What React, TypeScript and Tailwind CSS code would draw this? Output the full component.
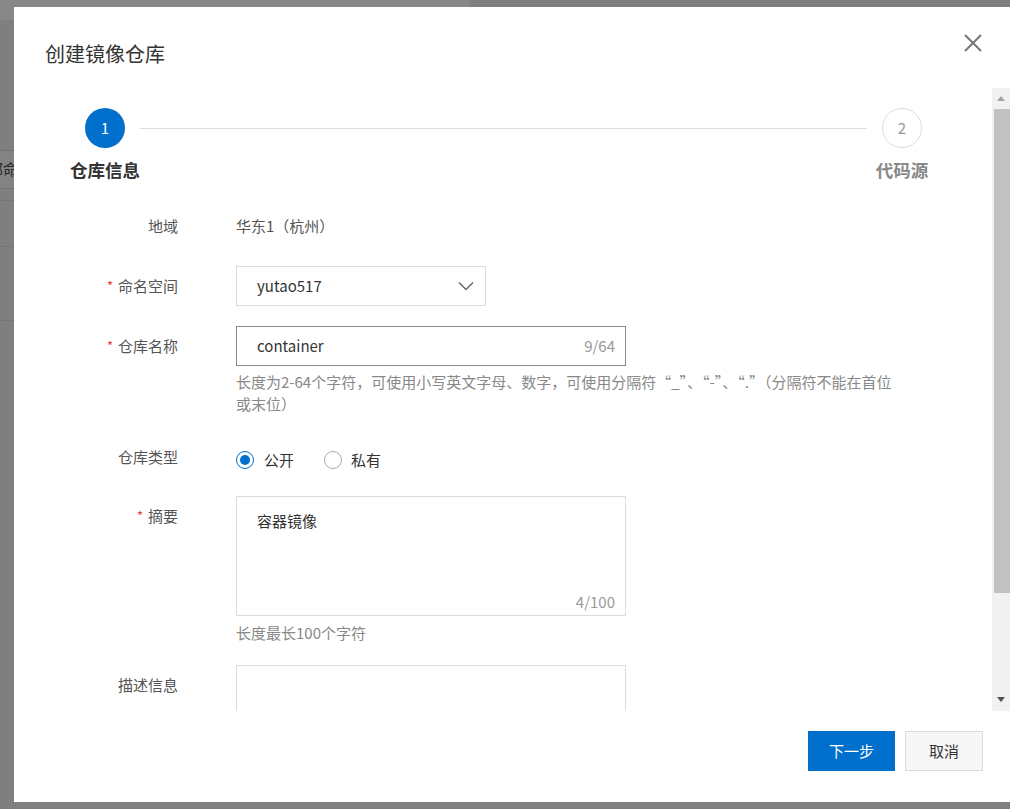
import React from "react";

const FONT = { fontFamily: '"Noto Sans CJK SC", "Noto Sans", sans-serif' };

function Label({ text, required }: { text: string; required?: boolean }) {
  return (
    <div className="flex w-[164px] shrink-0 justify-end whitespace-nowrap text-[15px] leading-[40px] text-[#555]">
      {required && <span className="mr-[5px] text-[13px] text-[#e8412f]">*</span>}
      <span>{text}</span>
    </div>
  );
}

export default function App() {
  return (
    <div className="relative h-[809px] w-[1010px] overflow-hidden bg-[#7f7f7f]" style={FONT}>
      {/* dimmed page behind the dialog */}
      <div className="h-[20px] w-[470px] bg-[#878787]" />
      <div className="h-[130px]" />
      <div className="flex h-[39px] items-center whitespace-nowrap border-y border-[#737373] bg-[#838383] text-[15px] text-[#262626]">
        <span className="-ml-[27px]">全部命名空间</span>
      </div>
      <div className="h-[11px]" />
      <div className="h-[46px] border-t border-[#767676]" />
      <div className="h-[74px] border-t border-[#767676]" />
      <div className="border-t border-[#767676]" />

      {/* dialog */}
      <div className="absolute left-[14px] top-[7px] flex h-[795px] w-[996px] flex-col bg-white">
        {/* header */}
        <div className="relative h-[81px] shrink-0 pl-[31px] pt-[33px]">
          <div className="text-[20px] leading-[28px] text-[#333]">创建镜像仓库</div>
          <button className="absolute right-[28px] top-[27px] h-[18px] w-[18px]">
            <svg width="18" height="18" viewBox="0 0 18 18">
              <path d="M1 1 L17 17 M17 1 L1 17" stroke="#777" strokeWidth="2" fill="none" />
            </svg>
          </button>
        </div>

        {/* body */}
        <div className="flex h-[623px] shrink-0">
          <div className="flex-1 overflow-hidden">
            {/* steps */}
            <div className="flex items-start pl-[56px] pr-[64px] pt-[20px]">
              <div className="flex w-[70px] flex-col items-center">
                <div className="flex h-[40px] w-[40px] items-center justify-center rounded-full bg-[#0070cc] text-[15px] text-white">
                  1
                </div>
                <div className="mt-[10px] whitespace-nowrap text-[17.5px] font-bold leading-[24px] text-[#333]">
                  仓库信息
                </div>
              </div>
              <div className="mr-[9px] mt-[20px] h-px flex-1 bg-[#dddddd]" />
              <div className="flex w-[52px] flex-col items-center">
                <div className="flex h-[40px] w-[40px] items-center justify-center rounded-full border border-[#dddddd] text-[15px] text-[#999]">
                  2
                </div>
                <div className="mt-[10px] whitespace-nowrap text-[17.5px] font-bold leading-[24px] text-[#888]">
                  代码源
                </div>
              </div>
            </div>

            {/* form */}
            <div className="flex flex-col">
              <div className="mt-[24px] flex">
                <Label text="地域" />
                <div className="ml-[58px] text-[15px] leading-[40px] text-[#555]">华东1（杭州）</div>
              </div>

              <div className="mt-[20px] flex">
                <Label text="命名空间" required />
                <div className="ml-[58px] flex h-[40px] w-[250px] items-center justify-between border border-[#dcdcdc] pl-[20px] pr-[11px] text-[15px] text-[#333]">
                  <span>yutao517</span>
                  <svg width="16" height="10" viewBox="0 0 16 10">
                    <path d="M1 1.5 L8 8.5 L15 1.5" stroke="#666" strokeWidth="1.5" fill="none" />
                  </svg>
                </div>
              </div>

              <div className="mt-[20px] flex">
                <Label text="仓库名称" required />
                <div className="ml-[58px] flex flex-col">
                  <div className="flex h-[40px] w-[390px] items-center justify-between border border-[#8a8a8a] pl-[20px] pr-[10px] text-[15px]">
                    <span className="text-[#333]">container</span>
                    <span className="text-[#999]">9/64</span>
                  </div>
                  <div className="mt-[5px] text-[15px] leading-[22px] text-[#888]">
                    <div className="whitespace-nowrap">
                      长度为2-64个字符，可使用小写英文字母、数字，可使用分隔符“_”、“-”、“.”（分隔符不能在首位
                    </div>
                    <div>或末位）</div>
                  </div>
                </div>
              </div>

              <div className="mt-[22px] flex">
                <Label text="仓库类型" />
                <div className="ml-[58px] flex h-[40px] items-center pt-[6px] text-[15px] text-[#333]">
                  <span className="flex h-[18px] w-[18px] items-center justify-center rounded-full border-[1.5px] border-[#0070cc]">
                    <span className="h-[10px] w-[10px] rounded-full bg-[#0070cc]" />
                  </span>
                  <span className="ml-[10px]">公开</span>
                  <span className="ml-[30px] h-[18px] w-[18px] rounded-full border border-[#aaaaaa]" />
                  <span className="ml-[9px]">私有</span>
                </div>
              </div>

              <div className="mt-[19px] flex">
                <Label text="摘要" required />
                <div className="ml-[58px] flex flex-col">
                  <div className="relative h-[120px] w-[390px] border border-[#dcdcdc] pl-[20px] pt-[13px] text-[15px] leading-[22px] text-[#333]">
                    容器镜像
                    <span className="absolute bottom-[2px] right-[10px] text-[#999]">4/100</span>
                  </div>
                  <div className="mt-[6px] text-[15px] leading-[22px] text-[#888]">长度最长100个字符</div>
                </div>
              </div>

              <div className="mt-[21px] flex">
                <Label text="描述信息" />
                <div className="ml-[58px] h-[120px] w-[390px] border border-[#dcdcdc]" />
              </div>
            </div>
          </div>

          {/* scrollbar */}
          <div className="flex w-[18px] shrink-0 flex-col bg-[#f1f1f1]">
            <div className="flex h-[21px] items-center justify-center">
              <svg width="8" height="5" viewBox="0 0 8 5">
                <path d="M0 5 L4 0 L8 5 Z" fill="#a3a3a3" />
              </svg>
            </div>
            <div className="ml-[2px] h-[484px] bg-[#c1c1c1]" />
            <div className="flex-1" />
            <div className="flex h-[24px] items-center justify-center">
              <svg width="8" height="5" viewBox="0 0 8 5">
                <path d="M0 0 L8 0 L4 5 Z" fill="#505050" />
              </svg>
            </div>
          </div>
        </div>

        {/* footer */}
        <div className="flex justify-end gap-[10px] pr-[27px] pt-[20px]">
          <button className="h-[40px] w-[87px] bg-[#0070cc] text-[15px] text-white">下一步</button>
          <button className="h-[40px] w-[78px] border border-[#dcdcdc] bg-[#f7f7f7] text-[15px] text-[#333]">
            取消
          </button>
        </div>
      </div>
    </div>
  );
}
